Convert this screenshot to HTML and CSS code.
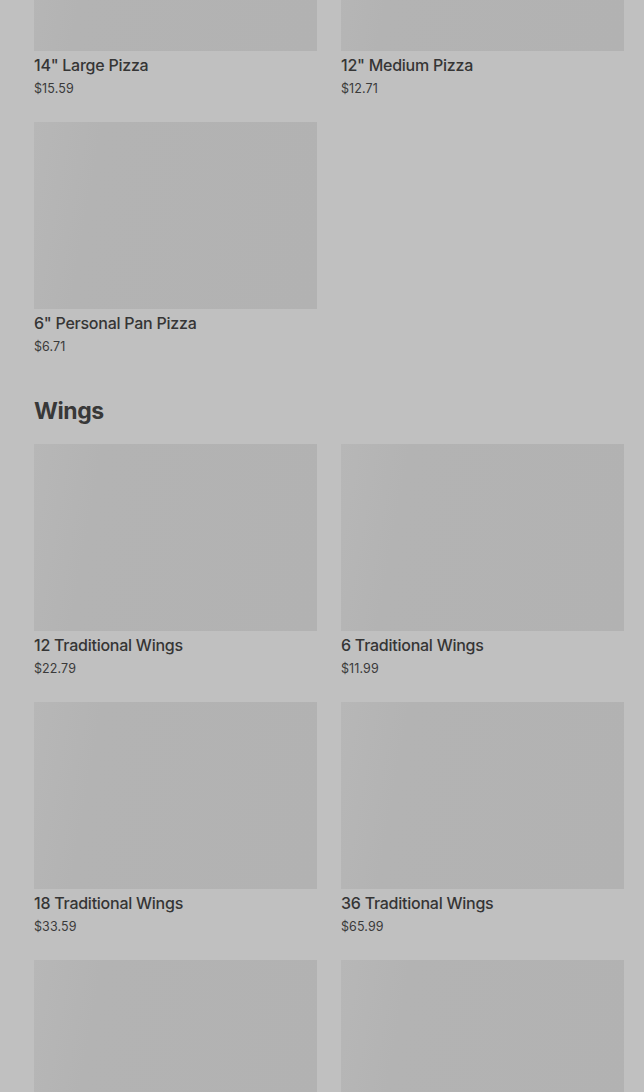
FILE: index.html
```html
<!DOCTYPE html>
<html lang="en">
<head>
  <meta charset="UTF-8">
  <title>Menu</title>
  <link rel="stylesheet" href="styles.css">
</head>
<body>
  <div class="menu">
    <section class="category scrolled">
      <div class="grid">
        <div class="item">
          <div class="thumb"></div>
          <div class="name">14" Large Pizza</div>
          <div class="price">$15.59</div>
        </div>
        <div class="item">
          <div class="thumb"></div>
          <div class="name">12" Medium Pizza</div>
          <div class="price">$12.71</div>
        </div>
        <div class="item">
          <div class="thumb"></div>
          <div class="name">6" Personal Pan Pizza</div>
          <div class="price">$6.71</div>
        </div>
      </div>
    </section>

    <section class="category">
      <h2>Wings</h2>
      <div class="grid">
        <div class="item">
          <div class="thumb"></div>
          <div class="name">12 Traditional Wings</div>
          <div class="price">$22.79</div>
        </div>
        <div class="item">
          <div class="thumb"></div>
          <div class="name">6 Traditional Wings</div>
          <div class="price">$11.99</div>
        </div>
        <div class="item">
          <div class="thumb"></div>
          <div class="name">18 Traditional Wings</div>
          <div class="price">$33.59</div>
        </div>
        <div class="item">
          <div class="thumb"></div>
          <div class="name">36 Traditional Wings</div>
          <div class="price">$65.99</div>
        </div>
        <div class="item">
          <div class="thumb"></div>
        </div>
        <div class="item">
          <div class="thumb"></div>
        </div>
      </div>
    </section>
  </div>
</body>
</html>
```

FILE: styles.css
```css
* {
  box-sizing: border-box;
}

html, body {
  margin: 0;
  padding: 0;
  background: #c0c0c0;
  color: #353535;
  font-family: 'Inter', 'Noto Sans', sans-serif;
  overflow: hidden;
}

.menu {
  padding: 0 20px 0 34px;
}

/* page is scrolled part way into the pizza list */
.scrolled {
  margin-top: -136px;
}

.category + .category {
  margin-top: 40px;
}

h2 {
  margin: 0 0 17px;
  font-size: 23px;
  line-height: 32px;
  font-weight: 700;
  letter-spacing: -0.4px;
  color: #383838;
}

.grid {
  display: grid;
  grid-template-columns: 1fr 1fr;
  column-gap: 24px;
  row-gap: 25px;
}

.thumb {
  height: 187px;
  background: linear-gradient(100deg, #b7b7b7 0%, #b3b3b3 22%, #b2b2b2 100%);
}

.name {
  margin-top: 4px;
  font-size: 16px;
  line-height: 20px;
  font-weight: 500;
  letter-spacing: -0.25px;
  color: #353535;
}

.price {
  margin-top: 6px;
  font-size: 12.5px;
  line-height: 16px;
  letter-spacing: 0.1px;
  color: #3a3a3a;
}
```
